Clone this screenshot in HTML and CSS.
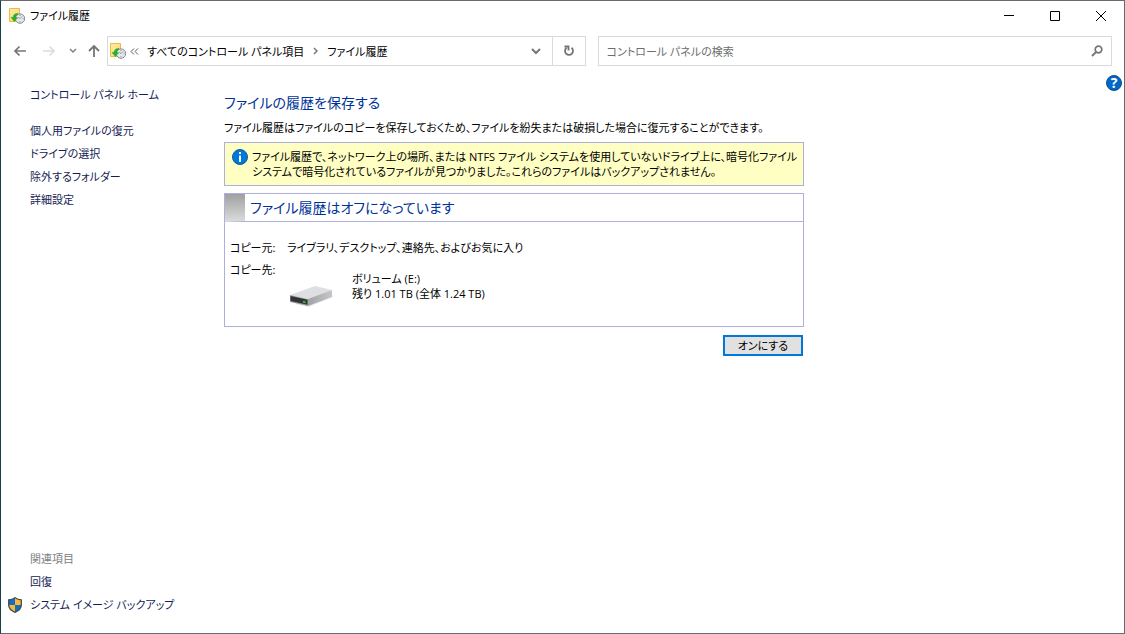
FILE: index.html
```html
<!DOCTYPE html>
<html lang="ja">
  <head>
    <meta charset="UTF-8" />
    <meta name="viewport" content="width=device-width, initial-scale=1.0" />
    <title>ファイル履歴</title>
    <link rel="stylesheet" href="styles.css">
  </head>

  <body>
    <svg class="defs" width="0" height="0" aria-hidden="true">
      <linearGradient id="folder" x1="0" y1="0" x2="1" y2="1">
        <stop offset="0" stop-color="#ffeba6" />
        <stop offset="1" stop-color="#fbd86e" />
      </linearGradient>
      <symbol id="history" viewBox="0 0 16 16">
        <path d="M0.5 0.5h10v13h-10z" fill="url(#folder)" stroke="#e9bd45" />
        <circle cx="11" cy="10.6" r="4.7" fill="#e4e8ea" stroke="#828b91" />
        <path d="M11 7v1M11 13.2v1M7.4 10.6h1M13.6 10.6h1M11 10.6l2.2-2.2M11 10.6l-1.6-1.2" stroke="#68747b" stroke-width=".7" fill="none" />
        <path d="M8.8 5.4C6.2 5.2 4.2 6.9 3.9 9.4H2l3.3 4.2 3.2-4H6.6c.1-1.6.8-2.8 2.2-3.2z" fill="#27b52c" stroke="#178d22" stroke-width=".4" />
      </symbol>
    </svg>

    <header class="titlebar">
      <svg class="icon"><use href="#history" /></svg>
      <div class="window-title">ファイル履歴</div>
      <button class="window-button" aria-label="最小化">
        <svg width="10" height="10"><path d="M0 4.5h10" stroke="#000" /></svg>
      </button>
      <button class="window-button" aria-label="最大化">
        <svg width="10" height="10"><path d="M.5 .5h9v9h-9z" fill="none" stroke="#000" /></svg>
      </button>
      <button class="window-button" aria-label="閉じる">
        <svg width="10" height="10"><path d="M0 0l10 10M10 0L0 10" stroke="#000" /></svg>
      </button>
    </header>

    <nav class="toolbar">
      <div class="nav-buttons">
        <button class="nav-button" aria-label="戻る">
          <svg width="14" height="12"><path d="M13 6H2M6.5 1.5L2 6l4.5 4.5" fill="none" stroke="#747474" stroke-width="1.7" /></svg>
        </button>
        <button class="nav-button" aria-label="進む" disabled>
          <svg width="14" height="12"><path d="M1 6h11M7.5 1.5L12 6l-4.5 4.5" fill="none" stroke="#dcdcdc" stroke-width="1.7" /></svg>
        </button>
        <button class="nav-button narrow" aria-label="最近の場所">
          <svg width="8" height="6"><path d="M1 1l3 3 3-3" fill="none" stroke="#808080" stroke-width="1.5" /></svg>
        </button>
        <button class="nav-button" aria-label="上へ">
          <svg width="12" height="14"><path d="M6 13V2M1 7l5-5 5 5" fill="none" stroke="#747474" stroke-width="1.8" /></svg>
        </button>
      </div>

      <div class="address">
        <svg class="icon"><use href="#history" /></svg>
        <svg class="back-chevrons" width="9" height="7"><path d="M4 .5l-3 3 3 3M8 .5l-3 3 3 3" fill="none" stroke="#555" /></svg>
        <a href="#" class="crumb">すべてのコントロール パネル項目</a>
        <svg class="separator" width="5" height="8"><path d="M1 1l3 3-3 3" fill="none" stroke="#777" stroke-width="1.5" /></svg>
        <a href="#" class="crumb">ファイル履歴</a>
        <button class="address-button dropdown" aria-label="以前の場所">
          <svg width="10" height="7"><path d="M1 1l4 4 4-4" fill="none" stroke="#777" stroke-width="2" /></svg>
        </button>
        <button class="address-button refresh" aria-label="最新の情報に更新">
          <svg width="12" height="12"><path d="M8.5 2.8A4 4 0 1 1 3.5 2.8" fill="none" stroke="#747474" stroke-width="1.8" /><path d="M1.5 1.5h4v4" fill="none" stroke="#747474" stroke-width="1.8" /></svg>
        </button>
      </div>

      <label class="search">
        <input type="search" class="search-input" placeholder="コントロール パネルの検索" aria-label="コントロール パネルの検索">
        <svg width="12" height="12"><circle cx="7.5" cy="4.5" r="3.3" fill="none" stroke="#777" stroke-width="1.7" /><path d="M5 7L1 11" stroke="#777" stroke-width="2" /></svg>
      </label>
    </nav>

    <div class="content">
      <aside class="sidebar">
        <a href="#" class="side-link home">コントロール パネル ホーム</a>
        <a href="#" class="side-link">個人用ファイルの復元</a>
        <a href="#" class="side-link">ドライブの選択</a>
        <a href="#" class="side-link">除外するフォルダー</a>
        <a href="#" class="side-link">詳細設定</a>

        <div class="related">
          <div class="related-title">関連項目</div>
          <a href="#" class="side-link">回復</a>
          <a href="#" class="side-link shielded">
            <svg width="14" height="16" viewBox="0 0 14 16">
              <path d="M7 .7C5 2.1 3 2.7.7 2.8V8c0 3.6 2.7 5.8 6.3 7.3z" fill="#0f6fca" />
              <path d="M7 .7c2 1.4 4 2 6.3 2.1V8c0 3.6-2.7 5.8-6.3 7.3z" fill="#fdb92b" />
              <path d="M.7 8H7v7.3C3.4 13.8.7 11.6.7 8z" fill="#fdb92b" />
              <path d="M13.3 8H7v7.3c3.6-1.5 6.3-3.7 6.3-7.3z" fill="#0f6fca" />
              <path d="M7 .7C5 2.1 3 2.7.7 2.8V8c0 3.6 2.7 5.8 6.3 7.3 3.6-1.5 6.3-3.7 6.3-7.3V2.8C11 2.7 9 2.1 7 .7z" fill="none" stroke="#444c54" stroke-width="1.3" />
            </svg>
            システム イメージ バックアップ
          </a>
        </div>
      </aside>

      <main class="main">
        <h1 class="heading">ファイルの履歴を保存する</h1>
        <p class="description">ファイル履歴はファイルのコピーを保存しておくため、ファイルを紛失または破損した場合に復元することができます。</p>

        <div class="notice">
          <svg class="icon" viewBox="0 0 16 16"><circle cx="8" cy="8" r="7.5" fill="#0078d7" stroke="#075da3" /><path d="M7 3h2v2H7zM7 6.5h2V13H7z" fill="#fff" /></svg>
          <p>ファイル履歴で、ネットワーク上の場所、または NTFS ファイル システムを使用していないドライブ上に、暗号化ファイル システムで暗号化されているファイルが見つかりました。これらのファイルはバックアップされません。</p>
        </div>

        <section class="panel">
          <h2 class="panel-title">ファイル履歴はオフになっています</h2>
          <dl class="details">
            <dt>コピー元:</dt>
            <dd>ライブラリ、デスクトップ、連絡先、およびお気に入り</dd>
            <dt>コピー先:</dt>
            <dd class="drive">
              <svg class="drive-icon" width="46" height="24" viewBox="0 0 46 24">
                <defs>
                  <linearGradient id="drive-side" x1="0" y1="0" x2="1" y2="0">
                    <stop offset="0" stop-color="#a2a2a4" />
                    <stop offset="1" stop-color="#c6c6c8" />
                  </linearGradient>
                </defs>
                <path d="M5 20l15 3 24-10v-2z" fill="#eee" />
                <path d="M1 11L26 2l17 4-23 9z" fill="#dedfe3" />
                <path d="M19 15L43 6v7L19 22z" fill="url(#drive-side)" />
                <path d="M1 11l18 4v7L1 18z" fill="#9c9c9f" />
                <path d="M1.5 12l17 3.7v5L1.5 17z" fill="#333436" />
                <path d="M14 17l2.5.6v1.6l-2.5-.6z" fill="#27dc3e" />
              </svg>
              <div>ボリューム (E:)<br>残り 1.01 TB (全体 1.24 TB)</div>
            </dd>
          </dl>
        </section>

        <div class="actions">
          <button class="turn-on">オンにする</button>
        </div>
      </main>

      <button class="help" aria-label="ヘルプ">?</button>
    </div>
  </body>
</html>
```

FILE: styles.css
```css
* {
  box-sizing: border-box;
}

body {
  margin: 0;
  min-height: 100vh;
  display: flex;
  flex-direction: column;
  border: 1px solid #6b6b6b;
  border-left-color: #173f4b;
  background-color: #fff;
  color: #000;
  font-family: "Open Sans", "Noto Sans CJK JP", sans-serif;
  font-size: 11px;
  line-height: 15px;
  font-feature-settings: "palt";
  white-space: nowrap;
}

p, h1, h2, dl, dd {
  margin: 0;
  font-weight: normal;
}

a {
  text-decoration: none;
}

button {
  padding: 0;
  border: 0;
  background: none;
  font: inherit;
  font-feature-settings: inherit;
}

svg {
  flex: none;
}

.defs {
  position: absolute;
}

.icon {
  width: 16px;
  height: 16px;
}

.titlebar {
  display: flex;
  align-items: center;
  height: 29px;
  padding-left: 8px;
}

.window-title {
  flex: 1;
  margin-left: 5px;
}

.window-button {
  display: flex;
  align-items: center;
  justify-content: center;
  width: 46px;
  height: 29px;
}

.toolbar {
  display: grid;
  grid-template-columns: 106px 10fr 11fr;
  align-items: center;
  height: 42px;
  padding-right: 12px;
}

.nav-buttons {
  display: flex;
  align-items: center;
  padding-left: 4px;
}

.nav-button {
  display: flex;
  align-items: center;
  justify-content: center;
  width: 29px;
  height: 30px;
}

.nav-button.narrow {
  width: 19px;
}

.nav-button:last-child {
  width: 24px;
}

.address {
  display: flex;
  align-items: center;
  height: 30px;
  padding-left: 2px;
  border: 1px solid #d9d9d9;
}

.back-chevrons {
  margin: 0 8px 0 4px;
}

.separator {
  margin: 0 9px;
}

.crumb {
  color: #000;
}

.address-button {
  display: flex;
  align-items: center;
  justify-content: center;
  width: 32px;
  height: 28px;
}

.dropdown {
  margin-left: auto;
}

.refresh {
  width: 33px;
  border-left: 1px solid #d9d9d9;
}

.search {
  display: flex;
  align-items: center;
  height: 30px;
  margin-left: 12px;
  padding: 0 8px;
  border: 1px solid #d9d9d9;
}

.search-input {
  flex: 1;
  padding: 0;
  border: 0;
  outline: 0;
  font: inherit;
  font-feature-settings: inherit;
}

.search-input::placeholder {
  color: #6d6d6d;
}

.content {
  flex: 1;
  display: flex;
  align-items: stretch;
  padding: 3px 2px 0 0;
}

.sidebar {
  display: flex;
  flex-direction: column;
  width: 223px;
  padding: 8px 0 17px 29px;
}

.side-link {
  color: #151c55;
  line-height: 23px;
}

.home {
  margin-bottom: 13px;
}

.related {
  display: flex;
  flex-direction: column;
  margin-top: auto;
}

.related-title {
  color: #808080;
  line-height: 23px;
}

.shielded {
  display: flex;
  align-items: center;
  gap: 8px;
  margin-left: -22px;
}

.main {
  flex: 0 1 580px;
  padding-top: 17px;
}

.heading {
  color: #003399;
  font-size: 14px;
  line-height: 22px;
}

.description {
  margin: 6px 0 7px;
}

.notice {
  display: flex;
  gap: 4px;
  padding: 6px 0 6px 7px;
  border: 1px solid #aeb0dc;
  background-color: #ffffc4;
  white-space: normal;
}

.panel {
  margin-top: 7px;
  border: 1px solid #aeb0dc;
}

.panel-title {
  padding-left: 5px;
  border-left: 20px solid transparent;
  border-bottom: 1px solid #aeb0dc;
  background: linear-gradient(#a0a0a0, #dcdcdc) border-box left / 20px 100% no-repeat;
  color: #003399;
  font-size: 14px;
  line-height: 27px;
}

.details {
  display: grid;
  grid-template-columns: 57px 1fr;
  row-gap: 7px;
  padding: 18px 5px;
}

.drive {
  display: flex;
  gap: 17px;
  padding: 9px 0 0 2px;
}

.drive-icon {
  margin-top: 13px;
}

.actions {
  display: flex;
  justify-content: flex-end;
  padding: 8px 1px 0 0;
}

.turn-on {
  width: 80px;
  height: 21px;
  border: 2px solid #0078d7;
  background-color: #e1e1e1;
  color: #000;
  line-height: 17px;
}

.help {
  width: 16px;
  height: 16px;
  margin-left: auto;
  border: 1px solid #075093;
  border-radius: 50%;
  background-color: #0067c8;
  color: #fff;
  font-size: 14px;
  font-weight: bold;
  line-height: 14px;
}
```
